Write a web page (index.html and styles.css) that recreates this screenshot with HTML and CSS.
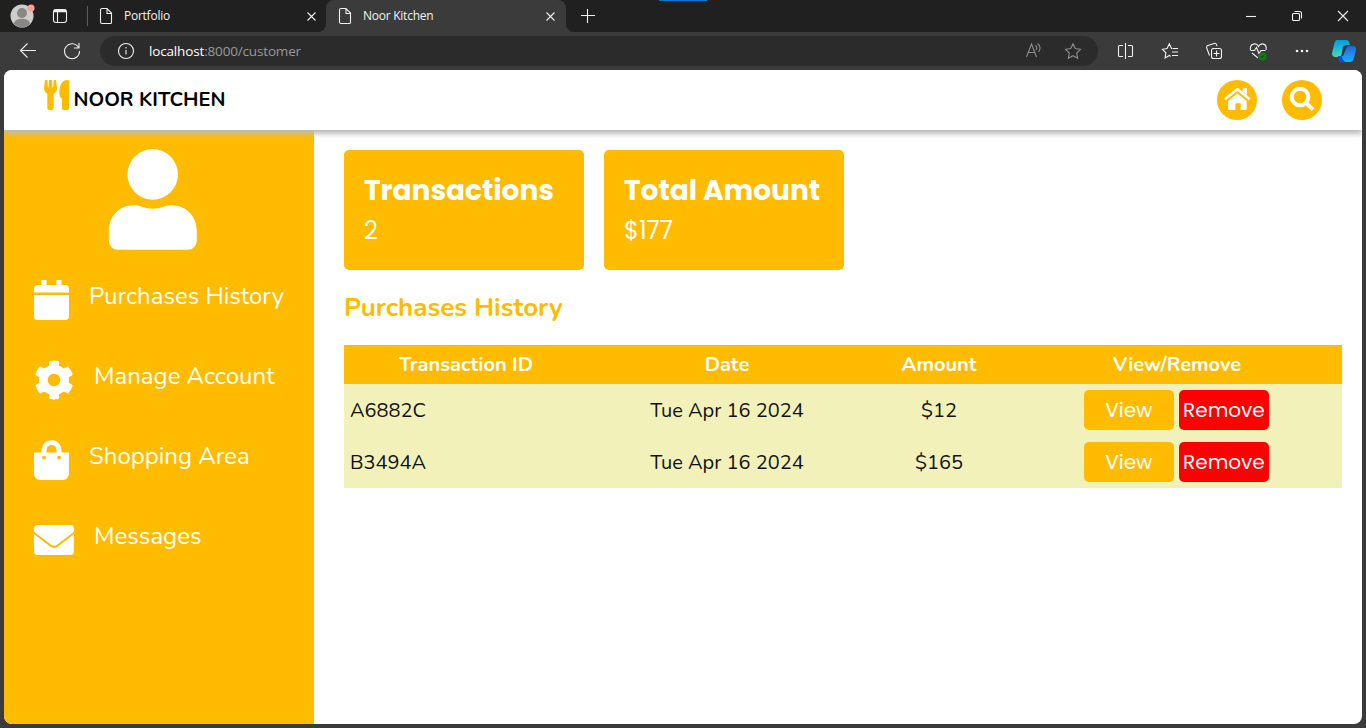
FILE: index.html
```html
<!DOCTYPE html>
<html lang="en">
<head>
<meta charset="utf-8">
<title>Noor Kitchen</title>
<link rel="stylesheet" href="styles.css">
</head>
<body>
<div class="window">
  <div class="tabstrip">
    <svg class="line profile" width="88" height="32" viewBox="0 0 88 32">
      <circle cx="22" cy="16" r="11.500" fill="#d0cecb" stroke="none"/>
      <circle cx="22" cy="13" r="5" fill="#8a8785" stroke="none"/>
      <path d="M14 24c0-7 16-7 16 0a11.500 11.500 0 0 1-16 0z" fill="#8a8785" stroke="none"/>
      <circle cx="31" cy="8" r="3.600" fill="#ff9c94" stroke="none"/>
      <rect x="53.500" y="9.500" width="13" height="13" rx="2.500"/>
      <path d="M57.500 12v10"/><path d="M54 11h12" stroke-width="2.500"/>
      <path d="M87.500 6v20" stroke="#5a5a5a"/>
    </svg>
    <div class="tab">
      <svg class="line" width="14" height="18" viewBox="0 0 14 18"><path d="M3 1.500h5l4.500 4.500v9.500a1 1 0 0 1-1 1h-8.500a1.500 1.500 0 0 1-1.500-1.500v-12a1.500 1.500 0 0 1 1.500-1.500zM8 1.500v5h4.500"/></svg>
      <span class="tab-title">Portfolio</span>
      <svg class="line" width="10" height="10" viewBox="0 0 10 10"><path d="M1.500 1.500l8 8M9.500 1.500l-8 8"/></svg>
    </div>
    <div class="tab active">
      <svg class="line" width="14" height="18" viewBox="0 0 14 18"><path d="M3 1.500h5l4.500 4.500v9.500a1 1 0 0 1-1 1h-8.500a1.500 1.500 0 0 1-1.500-1.500v-12a1.500 1.500 0 0 1 1.500-1.500zM8 1.500v5h4.500"/></svg>
      <span class="tab-title">Noor Kitchen</span>
      <svg class="line" width="10" height="10" viewBox="0 0 10 10"><path d="M1.500 1.500l8 8M9.500 1.500l-8 8"/></svg>
    </div>
    <svg class="line plus" width="14" height="14" viewBox="0 0 14 14"><path d="M0 6.500h14M6.500 0v14"/></svg>
    <span class="accent"></span>
    <svg class="line controls" width="126" height="32" viewBox="0 0 126 32">
      <path d="M6 16.500h10"/><rect x="52.500" y="13.500" width="7" height="7" rx="1"/><path d="M54.500 11.500h5a2 2 0 0 1 2 2v5"/>
      <path d="M98 11l10 10M108 11l-10 10"/>
    </svg>
  </div>
  <div class="toolbar">
    <svg class="line" width="100" height="38" viewBox="0 32 100 38">
      <path d="M36 50.500h-15.500M27.500 43.500l-7 7 7 7"/>
      <path d="M78.500 47.500a7.500 7.500 0 1 0 1 3.500M79 43v5h-5"/>
    </svg>
    <div class="address">
      <svg class="line" width="18" height="18" viewBox="0 0 18 18"><circle cx="9" cy="9" r="7.500"/><path d="M9 8v4.500M9 5v1.500"/></svg>
      <span class="url"><b>localhost</b>:8000/customer</span>
      <svg class="line dim" width="62" height="30" viewBox="1024 36 62 30">
        <path d="M1026.500 57l5-13 5 13M1028.500 52.500h6M1035.500 45.500c1.500 1 1.500 3 .5 4.500M1037.500 43.500c3.500 2.500 3 6 1 8.500"/>
        <path d="M1073 43.800l2.300 4.700 5.200.8-3.800 3.700.9 5.200-4.600-2.500-4.600 2.500.9-5.200-3.800-3.700 5.200-.8z"/>
      </svg>
    </div>
    <svg class="line" width="268" height="38" viewBox="1098 32 268 38">
      <defs>
        <linearGradient id="ca" x1="0" y1="0" x2="0" y2="1"><stop offset="0" stop-color="#079ad9"/><stop offset=".5" stop-color="#18bddb"/><stop offset="1" stop-color="#58d98d"/></linearGradient>
        <linearGradient id="cb" x1="0" y1="0" x2="0" y2="1"><stop offset="0" stop-color="#1d66d2"/><stop offset=".5" stop-color="#2588ef"/><stop offset="1" stop-color="#08bdf3"/></linearGradient>
      </defs>
      <path d="M1123 45.500h-3.500a1 1 0 0 0-1 1v9a1 1 0 0 0 1 1h3.500M1128 45.500h3.500a1 1 0 0 1 1 1v9a1 1 0 0 1-1 1h-3.500M1125.500 43v16"/>
      <path d="M1172.500 48.500h-1l-2.200-4.800-2.200 4.800-4.600.8 3.400 3.500-.8 5.200 4.200-2.500 1.500.9M1173 48.500h5M1172 52h6M1172 55.500h6"/>
      <rect x="1211.500" y="48.500" width="10" height="10" rx="2"/><path d="M1216.500 50.500v6M1213.500 53.500h6M1209.500 55.500l-2.800-7.500a2 2 0 0 1 1.300-2.600l6-2a2 2 0 0 1 2.500 1.300l.5 1.500"/>
      <path d="M1250.500 50c-1-7 6-7.500 8-3.500 2-4 9-3.500 7.500 3.500M1250.500 50.500h4l2-3 2.500 6 2-3h4.500M1252 53l6 5"/><circle cx="1262.500" cy="56.500" r="3.500" fill="#107c10" stroke="#107c10"/><path d="M1261 56.500l1 1 2-2" stroke="#075007"/>
      <g fill="#f0f0f0" stroke="none"><circle cx="1297" cy="51" r="1.300"/><circle cx="1302" cy="51" r="1.300"/><circle cx="1307" cy="51" r="1.300"/></g>
      <g stroke="none"><path d="M1337 40h9c2 0 3 1 3.500 3l.5 3h-3c-2 0-3 1-3.500 3l-1.500 5c-.5 2-2 3-4 3h-2c-3 0-4.500-2-3.700-5l2-8c.7-2.700 1.200-4 2.700-4z" fill="url(#ca)"/><path d="M1338 56h4c1 0 1.500-.5 2-2l2-5c.7-2 1.500-3 3.500-3h3c3 0 4 2 3.300 5l-2 7c-.8 3-1.800 4-4.300 4h-7c-2 0-3-1-3.500-3z" fill="url(#cb)"/><path d="M1338 56h3.500c1 2 1.500 5 4 6h-3c-3 0-3.500-2-4.500-6z" fill="#1648e0"/><path d="M1343 46.500l3-1.500h3.500l.5 1c-3 0-4.500 1-5 3l-1.500 5c-.5 1.500-1 2-2 2z" fill="#263443"/></g>
    </svg>
  </div>

  <div class="page">
    <header class="header">
      <div class="brand">
        <svg width="25" height="30" viewBox="132 240 75 90" fill="#ffbb00"><path d="M135 240h7l1.500 22q1 2 2 0l1.500-22h9l1.500 22q1 2 2 0l1.500-22h7l3 24q0 12-10 17v44q0 5-5 5h-9q-5 0-5-5v-44q-10-5-10-17zM202 240q5 0 5 4v81q0 5-5 5h-11q-5 0-5-5v-27q-9-8-8-22 0-25 14-34 5-2 10-2z"/></svg>
        <span>NOOR KITCHEN</span>
      </div>
      <div class="actions">
        <svg width="40" height="40" viewBox="0 0 120 120"><circle cx="60" cy="60" r="60" fill="#ffbb00"/><g fill="#fff"><path d="M77 27q0-3 3-3h7q3 0 3 3v20l-13-10z"/><path d="M61 40l28 23v23q0 4-4 4H71V72q0-2-2-2H57q-2 0-2 2v18H37q-4 0-4-4V63z"/></g><path d="M24 60l34-29q3-3 6 0l34 29" fill="none" stroke="#ffbb00" stroke-width="12"/><path d="M24 58l34-28q3-3 6 0l34 28" fill="none" stroke="#fff" stroke-width="8"/></svg>
        <svg width="40" height="40" viewBox="0 0 120 120"><circle cx="60" cy="60" r="60" fill="#ffbb00"/><circle cx="54" cy="51" r="25" fill="none" stroke="#fff" stroke-width="12"/><path d="M72 69l21 20" stroke="#fff" stroke-width="12"/></svg>
      </div>
    </header>
    <div class="body">
      <nav class="sidebar">
        <svg class="avatar" width="90" height="102" viewBox="108 148 90 102" fill="#fff"><circle cx="152.700" cy="174.400" r="25.300"/><path d="M134 205.300q5-.3 8 1.500 10.700 4 21.400 0 3-1.800 8-1.500c15 0 25.400 11 25.400 26v9.500a9 9 0 0 1-9 9h-70a9 9 0 0 1-9-9v-9.500c0-15 10.200-26 25.200-26z"/></svg>
        <div class="nav-item"><svg width="35" height="40" viewBox="0 0 448 512" fill="#fff"><path d="M96 0h64v64h128V0h64v64h48q48 0 48 48v48H0v-48q0-48 48-48h48zM0 192h448v272q0 48-48 48H48q-48 0-48-48z"/></svg><span>Purchases History</span></div>
        <div class="nav-item"><svg width="40" height="40" viewBox="0 0 512 512" fill="#fff"><path d="M487.400 315.700l-42.600-24.600c4.300-23.200 4.300-47 0-70.200l42.600-24.600c4.900-2.800 7.100-8.600 5.500-14-11.100-35.600-30-67.800-54.700-94.600-3.800-4.100-10-5.100-14.800-2.300L380.800 110c-17.900-15.400-38.500-27.300-60.800-35.100V25.800c0-5.600-3.900-10.500-9.400-11.700-36.700-8.200-74.300-7.800-109.200 0-5.500 1.200-9.400 6.100-9.400 11.700V75c-22.200 7.900-42.800 19.800-60.800 35.100L88.700 85.500c-4.900-2.800-11-1.900-14.800 2.300-24.700 26.700-43.600 58.900-54.700 94.600-1.700 5.400.6 11.200 5.500 14L67.300 221c-4.300 23.200-4.300 47 0 70.200l-42.600 24.600c-4.900 2.800-7.100 8.600-5.500 14 11.100 35.600 30 67.800 54.700 94.600 3.800 4.100 10 5.100 14.800 2.300l42.600-24.600c17.900 15.400 38.500 27.300 60.800 35.100v49.200c0 5.600 3.900 10.500 9.400 11.700 36.700 8.200 74.300 7.800 109.200 0 5.500-1.200 9.400-6.100 9.400-11.700v-49.200c22.200-7.900 42.800-19.800 60.800-35.100l42.600 24.600c4.900 2.800 11 1.900 14.800-2.300 24.700-26.700 43.600-58.900 54.700-94.600 1.500-5.500-.7-11.300-5.600-14.100zM256 336c-44.100 0-80-35.900-80-80s35.900-80 80-80 80 35.900 80 80-35.900 80-80 80z"/></svg><span>Manage Account</span></div>
        <div class="nav-item"><svg width="35" height="40" viewBox="0 0 448 512"><path fill="#fff" fill-rule="evenodd" d="M96 160v-32a128 128 0 0 1 256 0v32h96v272a80 80 0 0 1-80 80H80a80 80 0 0 1-80-80V160zm64 0h128v-32a64 64 0 0 0-128 0z"/><circle cx="128" cy="224" r="24" fill="#ffbb00"/><circle cx="320" cy="224" r="24" fill="#ffbb00"/></svg><span>Shopping Area</span></div>
        <div class="nav-item"><svg width="40" height="40" viewBox="0 0 512 512" fill="#fff"><path d="M48 64h416q48 0 48 48v38L294 317q-38 28-76 0L0 150v-38q0-48 48-48zM0 180l200 157q56 40 112 0L512 180v220q0 48-48 48H48q-48 0-48-48z"/></svg><span>Messages</span></div>
      </nav>
      <main class="main">
        <div class="cards">
          <div class="card"><h3>Transactions</h3><p>2</p></div>
          <div class="card"><h3>Total Amount</h3><p>$177</p></div>
        </div>
        <h2>Purchases History</h2>
        <table>
          <colgroup><col class="w1"><col class="w2"><col class="w3"><col class="w4"></colgroup>
          <thead><tr><th>Transaction ID</th><th>Date</th><th>Amount</th><th>View/Remove</th></tr></thead>
          <tbody>
            <tr><td>A6882C</td><td>Tue Apr 16 2024</td><td>$12</td><td><div class="btns"><button>View</button><button class="remove">Remove</button></div></td></tr>
            <tr><td>B3494A</td><td>Tue Apr 16 2024</td><td>$165</td><td><div class="btns"><button>View</button><button class="remove">Remove</button></div></td></tr>
          </tbody>
        </table>
      </main>
    </div>
  </div>
</div>
</body>
</html>
```

FILE: styles.css
```css
* { box-sizing: border-box; margin: 0; padding: 0; }
body { width: 1366px; height: 728px; overflow: hidden; background: #3b3b3b; font-family: Nunito, Lato, sans-serif; }
svg { display: block; flex: none; }
.window { height: 728px; display: flex; flex-direction: column; }
.line { fill: none; stroke: #f0f0f0; stroke-width: 1.1; }
.dim { stroke: #8d8d8d; }

.tabstrip { height: 32px; display: flex; align-items: center; background: #3b3b3b; font: 12px/16px "Segoe UI", "Open Sans", sans-serif; letter-spacing: -.25px; color: #f2f2f2; }
.tabstrip > * { background-color: #202020; }
.tab { height: 32px; width: 238px; padding: 0 10px 0 11px; display: flex; align-items: center; border-radius: 0 0 8px 0; }
.tab.active { width: 240px; padding-left: 12px; padding-right: 11px; background: #3b3b3b; border-radius: 8px 8px 0 0; box-shadow: 0 -8px 0 8px #202020; clip-path: inset(0); }
.tab-title { flex: 1; padding-left: 11px; white-space: nowrap; }
.plus { width: 44px; height: 32px; padding: 9px 15px; border-radius: 0 0 0 8px; }
.accent { width: 630px; height: 32px; background: linear-gradient(#0078d4, #0078d4) 49px 0 / 48px 1px no-repeat #202020; }
.controls { width: 126px; }

.toolbar { height: 38px; display: flex; align-items: center; }
.address { width: 998px; height: 30px; padding: 0 12px 0 17px; border-radius: 15px; background: #2b2b2b; display: flex; align-items: center; }
.url { flex: 1; padding-left: 14px; font: 13.5px/20px "Segoe UI", "Open Sans", sans-serif; color: #999; letter-spacing: -.16px; }
.url b { font-weight: 400; color: #fff; }

.page { width: 1358px; height: 654px; margin-left: 4px; border-radius: 8px; overflow: hidden; background: #fff; display: flex; flex-direction: column; }
.header { position: relative; z-index: 1; height: 60px; padding: 10px 40px; display: flex; justify-content: space-between; background: #fff; box-shadow: 0 4px 5px #bbb; }
.brand { display: flex; gap: 4.500px; font-size: 20px; font-weight: 700; line-height: 39px; color: #000; }
.actions { display: flex; gap: 25px; }
.body { flex: 1; display: flex; }
.sidebar { width: 310px; padding: 18px 0 0 30px; background: #ffbb00; color: #fff; }
.avatar { margin: 0 0 30px 74px; }
.nav-item { height: 80px; display: flex; gap: 20px; font-size: 24px; line-height: 32px; white-space: nowrap; }

.main { flex: 1; padding: 20px 20px 0 30px; }
.cards { display: flex; gap: 20px; font-family: Poppins, Inter, sans-serif; color: #fff; }
.card { width: 240px; height: 120px; padding: 21px 20px 19px; border-radius: 5px; background: #ffbb00; white-space: nowrap; }
.card h3 { font-size: 28px; line-height: 40px; font-weight: 700; }
.card p { font-size: 24px; line-height: 39px; }
h2 { margin: 23px 0 22px; font-size: 26px; line-height: 30px; font-weight: 700; color: #ffbb00; }
table { width: 998px; table-layout: fixed; border-collapse: collapse; font-size: 20px; color: #111; background: #f1f1b9; }
.w1 { width: 244px; } .w2 { width: 278px; } .w3 { width: 146px; } .w4 { width: 330px; }
th { height: 39px; background: #ffbb00; color: #fff; font-weight: 700; text-align: center; }
td { height: 52px; text-align: center; }
td:first-child { text-align: left; padding-left: 6px; }
td:last-child { padding-right: 1.200px; }
.btns { display: flex; justify-content: center; gap: 5px; }
button { width: 90px; height: 40px; border: 0; border-radius: 5px; background: #ffbb00; color: #fff; font: 20px/40px Poppins, Inter, sans-serif; }
.remove { background: #f00; }
```
